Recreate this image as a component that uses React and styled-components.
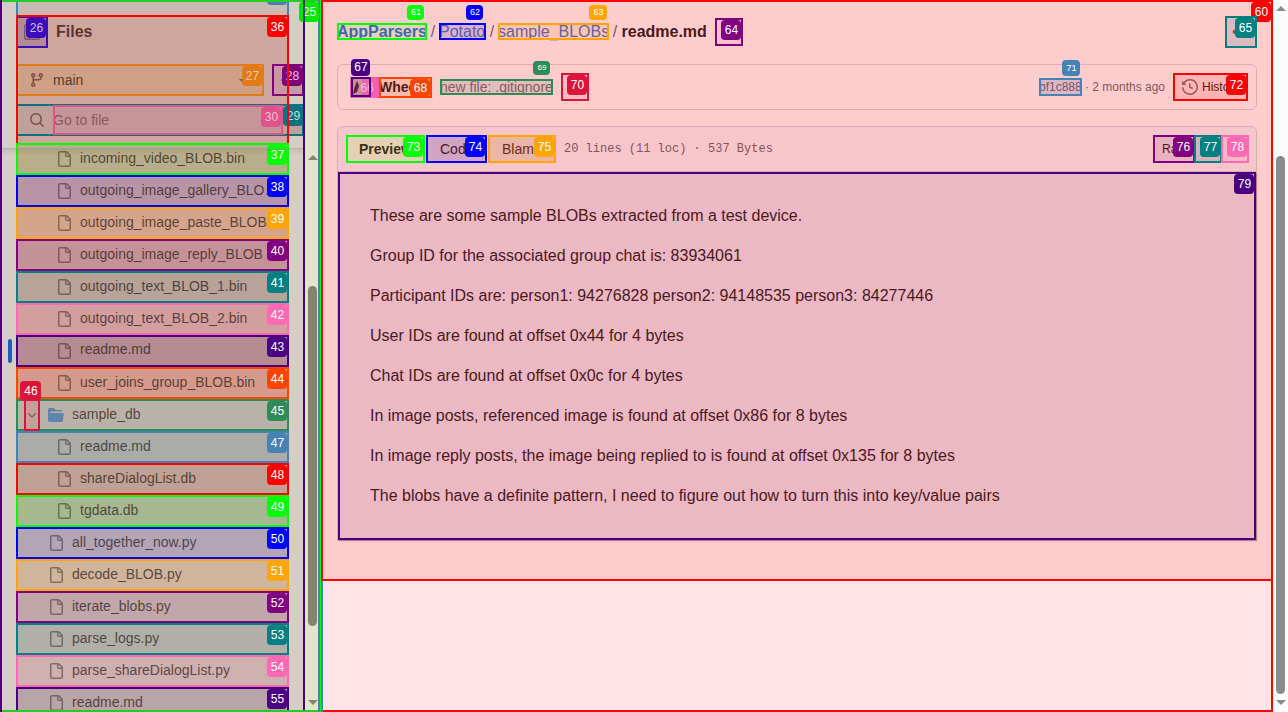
import React from "react";
import styled, { createGlobalStyle } from "styled-components";

const Global = createGlobalStyle`
  * { box-sizing: border-box; }
  html, body { margin: 0; overflow: hidden; }
  body { font-family: "Liberation Sans", Arial, sans-serif; font-size: 14px; color: #4b1820; }
  p { margin: 0; }
`;

const Shell = styled.div`
  display: flex;
  width: 1288px;
  height: 712px;
  overflow: hidden;
`;

/* ---- numbered outlines ---- */
const Outline = styled.span`
  position: absolute;
  inset: 0;
  border: 2px solid ${(p) => p.$c};
  pointer-events: none;
`;
const Tag = styled.span`
  position: absolute;
  top: ${(p) => p.$top}px;
  right: ${(p) => p.$right}px;
  width: ${(p) => p.$w}px;
  height: ${(p) => p.$h}px;
  display: flex;
  align-items: center;
  justify-content: center;
  padding-left: 1px;
  border-radius: 4px;
  background: ${(p) => p.$c};
  color: ${(p) => p.$ink || "#fff"};
  font: 400 ${(p) => p.$size}px/1 "Liberation Sans", Arial, sans-serif;
  letter-spacing: 0;
`;
const Mark = ({ c, n, top = 0, right = 0, w = 20, h = 20, size = 12, ink }) => (
  <Outline $c={c}>
    <Tag $c={c} $top={top} $right={right} $w={w} $h={h} $size={size} $ink={ink}>{n}</Tag>
  </Outline>
);

/* ---- sidebar ---- */
const Sidebar = styled.aside`
  position: relative;
  display: flex;
  flex: none;
  width: 323px;
  height: 712px;
  background: #d6cdc4;
  border-left: 2px solid #4b0082;
`;
const Pane = styled.div`
  width: 303px;
  padding-left: 14px;
  border-right: 2px solid #4b0082;
  overflow: hidden;
`;
const TopStrip = styled.div`
  position: relative;
  width: 273px;
  height: 15px;
  background: #cbb9b2;
  border: solid #4682b4;
  border-width: 0 2px;
`;
const Header = styled.div`
  position: relative;
  width: 273px;
  height: 128px;
  background: #cfa69e;
  padding-top: 1px;
`;
const HeaderFrame = styled.span`
  position: absolute;
  inset: 0;
  border: 2px solid #f00;
  border-bottom: 0;
`;
const TitleRow = styled.div`
  display: flex;
  align-items: center;
  gap: 8px;
  height: 32px;
  font-size: 16px;
  font-weight: 700;
  color: #5f342e;
`;
const PanelButton = styled.div`
  position: relative;
  width: 32px;
  height: 32px;
  padding: 8px;
  background: #b58b9c;
  color: #7d5a60;
`;
const BranchRow = styled.div`
  display: flex;
  gap: 8px;
  width: 288px;
  margin-top: 16px;
`;
const Branch = styled.div`
  position: relative;
  display: flex;
  align-items: center;
  gap: 8px;
  width: 248px;
  height: 32px;
  padding-left: 13px;
  background: #cf9f86;
  color: #5f3a28;
`;
const Caret = styled.span`
  position: absolute;
  right: 15px;
  top: 15px;
  border: 5px solid transparent;
  border-top-color: #80503c;
  border-bottom: 0;
`;
const Plus = styled.div`
  position: relative;
  width: 32px;
  height: 32px;
  background: #c79aa2;
`;
const Search = styled.div`
  position: relative;
  display: flex;
  align-items: center;
  gap: 8px;
  width: 288px;
  height: 32px;
  margin-top: 8px;
  padding-left: 13px;
  background: #c0a098;
  color: #7a504c;
`;
const SearchField = styled.div`
  position: relative;
  width: 230px;
  height: 30px;
  line-height: 30px;
  background: #c69597;
  color: #855a62;
`;
const Tree = styled.div`
  position: relative;
  width: 273px;
`;
const Row = styled.div`
  position: relative;
  display: flex;
  align-items: center;
  gap: 8px;
  height: 32px;
  padding-left: ${(p) => p.$pad}px;
  background: ${(p) => p.$bg};
  color: rgba(28, 12, 8, 0.68);
  white-space: nowrap;
`;
const Name = styled.span`
  overflow: hidden;
  text-overflow: ellipsis;
  width: ${(p) => p.$w || "auto"};
  margin-bottom: ${(p) => (p.$up ? 4 : 2)}px;
`;
const Current = styled.span`
  position: absolute;
  left: -8px;
  top: 4px;
  width: 4px;
  height: 24px;
  border-radius: 3px;
  background: #1f5fae;
`;
const Chevron = styled.span`
  position: relative;
  width: 16px;
  height: 32px;
  display: flex;
  align-items: center;
  background: #c4a09c;
`;
const ChevronMark = styled.span`
  position: absolute;
  left: 8px;
  top: 0;
  width: 16px;
  height: 32px;
`;
const HeaderEdge = styled.div`
  position: absolute;
  left: -14px;
  top: 5px;
  width: 301px;
  height: 8px;
  border-top: 1px solid rgba(130, 150, 150, 0.45);
  background: linear-gradient(rgba(60, 60, 40, 0.1), rgba(60, 60, 40, 0));
`;
const SideTrack = styled.div`
  display: flex;
  flex-direction: column;
  align-items: center;
  width: 13px;
  background: #e2e4cc;
  padding: 155px 0 7px 2px;
`;
const Stripe = styled.div`
  width: ${(p) => p.$w}px;
  background: ${(p) => p.$c};
`;
const Arrow = styled.span`
  flex: none;
  border: solid transparent;
  border-width: ${(p) => (p.$down ? "5px 5px 0" : "0 5px 5px")};
  border-${(p) => (p.$down ? "top" : "bottom")}-color: ${(p) => p.$c};
`;
const Thumb = styled.div`
  flex: none;
  width: 9px;
  height: ${(p) => p.$h}px;
  margin-top: ${(p) => p.$mt}px;
  margin-bottom: auto;
  border-radius: 5px;
  background: ${(p) => p.$c};
`;
const EdgeLine = styled.span`
  position: absolute;
  left: 0;
  right: 5px;
  height: 2px;
  ${(p) => p.$side}: 0;
  background: #22cf22;
`;
const SidebarTag = styled.span`
  position: absolute;
  left: 297px;
  top: 0;
  width: 20px;
  height: 22px;
`;
const TagDivider = styled.span`
  position: absolute;
  left: 301px;
  top: 0;
  width: 2px;
  height: 22px;
  background: #4b0082;
  opacity: 0.75;
`;

/* ---- main ---- */
const Main = styled.main`
  position: relative;
  display: flex;
  flex-direction: column;
  width: 950px;
  height: 712px;
  background: #ffe5e5;
  border: solid #f00;
  border-width: 0 2px 2px 0;
`;
const Content = styled.section`
  position: relative;
  height: 581px;
  padding: 14px 14px 0;
  background: #ffcccc;
  border: solid #f00;
  border-width: 2px 0;
`;
const Crumbs = styled.nav`
  display: flex;
  align-items: center;
  height: 32px;
  font-size: 16px;
  color: #84545a;
`;
const Crumb = styled.a`
  position: relative;
  width: ${(p) => p.$w}px;
  height: 17px;
  margin-bottom: 2px;
  line-height: 17px;
  background: ${(p) => p.$bg};
  color: ${(p) => p.$fg};
  font-weight: ${(p) => (p.$bold ? 700 : 400)};
  white-space: nowrap;
`;
const Slash = styled.span`
  width: 12px;
  text-align: center;
`;
const FileName = styled.strong`
  width: 94px;
  padding-left: 0.5px;
  color: #4b1820;
`;
const Square = styled.div`
  position: relative;
  display: flex;
  align-items: center;
  width: ${(p) => p.$s || 28}px;
  height: ${(p) => p.$s || 28}px;
  margin-left: ${(p) => p.$ml || "0"};
  padding-left: 7px;
  background: ${(p) => p.$bg};
`;
const Commit = styled.div`
  display: flex;
  align-items: center;
  width: 920px;
  height: 46px;
  margin-top: 16px;
  padding: 0 8px 0 12px;
  border: 1px solid #dbacb2;
  border-radius: 6px;
`;
const Avatar = styled.div`
  position: relative;
  width: 29px;
  height: 21px;
  background: #f45fb0;
`;
const AvatarFrame = styled.div`
  position: absolute;
  left: 1px;
  top: 0;
  width: 20px;
  height: 20px;
`;
const AvatarNumber = styled.span`
  position: absolute;
  left: 10.5px;
  top: 4px;
  font-size: 12px;
  line-height: 14px;
  color: #f7c0e0;
`;
const Box = styled.div`
  position: relative;
  flex: none;
  width: ${(p) => p.$w}px;
  height: ${(p) => p.$h}px;
  margin-left: ${(p) => p.$ml || "0"};
  line-height: ${(p) => p.$h}px;
  background: ${(p) => p.$bg};
  color: ${(p) => p.$fg || "#4b1820"};
  font-size: ${(p) => p.$size || 14}px;
  font-weight: ${(p) => (p.$bold ? 700 : 400)};
  white-space: nowrap;
  padding-left: ${(p) => p.$pl || 0}px;
`;
const When = styled.span`
  width: 91px;
  padding-left: 3px;
  font-size: 12px;
  color: #84545a;
  white-space: nowrap;
`;
const History = styled(Box)`
  display: flex;
  align-items: center;
  gap: 4px;
`;
const FileCard = styled.div`
  width: 920px;
  height: 415px;
  margin-top: 16px;
  border: 1px solid #dbacb2;
  border-radius: 6px 6px 0 0;
  background: #f7c6ca;
`;
const Toolbar = styled.div`
  display: flex;
  align-items: center;
  height: 45px;
  padding: 0 7px 1px 8px;
  border-bottom: 1px solid #dbacb2;
`;
const Stats = styled.span`
  margin-left: 8px;
  font: 12px "Liberation Mono", monospace;
  color: #84545a;
`;
const Markdown = styled.article`
  position: relative;
  display: flex;
  flex-direction: column;
  gap: 16px;
  height: 368px;
  padding: 32px;
  background: #ebb8c4;
  font-size: 16px;
  line-height: 24px;
  box-shadow: 1px 1px 1px rgba(120, 60, 80, 0.4);
`;
const PageTrack = styled.div`
  display: flex;
  flex-direction: column;
  align-items: center;
  width: 15px;
  padding: 6px 0 7px;
  background: #fcfcfc;
`;

const FileIcon = () => (
  <svg width="16" height="16" viewBox="0 0 16 16" fill="currentColor" opacity=".62">
    <path d="M2 1.75C2 .784 2.784 0 3.75 0h6.586c.464 0 .909.184 1.237.513l2.914 2.914c.329.328.513.773.513 1.237v9.586A1.75 1.75 0 0 1 13.25 16h-9.5A1.75 1.75 0 0 1 2 14.25Zm1.75-.25a.25.25 0 0 0-.25.25v12.5c0 .138.112.25.25.25h9.5a.25.25 0 0 0 .25-.25V6h-2.75A1.75 1.75 0 0 1 9 4.25V1.5Zm6.75.062V4.25c0 .138.112.25.25.25h2.688l-.011-.013-2.914-2.914-.013-.011Z" />
  </svg>
);
const FolderIcon = () => (
  <svg width="16" height="16" viewBox="0 0 16 16" fill="#5f86a8">
    <path d="M.513 1.513A1.75 1.75 0 0 1 1.75 1h3.5c.55 0 1.07.26 1.4.7l.9 1.2a.25.25 0 0 0 .2.1H13a1 1 0 0 1 1 1v.5H2.75a.75.75 0 0 0 0 1.5h11.978a1 1 0 0 1 .994 1.117L15 13.25A1.75 1.75 0 0 1 13.25 15H1.75A1.75 1.75 0 0 1 0 13.25V2.75c0-.464.184-.91.513-1.237Z" />
  </svg>
);
const BranchIcon = () => (
  <svg width="16" height="16" viewBox="0 0 16 16" fill="#80503f">
    <path d="M9.5 3.25a2.25 2.25 0 1 1 3 2.122V6A2.5 2.5 0 0 1 10 8.5H6a1 1 0 0 0-1 1v1.128a2.251 2.251 0 1 1-1.5 0V5.372a2.25 2.25 0 1 1 1.5 0v1.836A2.493 2.493 0 0 1 6 7h4a1 1 0 0 0 1-1v-.628A2.25 2.25 0 0 1 9.5 3.25Zm-6 0a.75.75 0 1 0 1.5 0 .75.75 0 0 0-1.5 0Zm8.25-.75a.75.75 0 1 0 0 1.5.75.75 0 0 0 0-1.5ZM4.25 12a.75.75 0 1 0 0 1.5.75.75 0 0 0 0-1.5Z" />
  </svg>
);
const SearchIcon = () => (
  <svg width="16" height="16" viewBox="0 0 16 16" fill="currentColor">
    <path d="M10.68 11.74a6 6 0 0 1-7.922-8.982 6 6 0 0 1 8.982 7.922l3.04 3.04a.749.749 0 0 1-.326 1.275.749.749 0 0 1-.734-.215ZM11.5 7a4.499 4.499 0 1 0-8.997 0A4.499 4.499 0 0 0 11.5 7Z" />
  </svg>
);
const HistoryIcon = () => (
  <svg width="16" height="16" viewBox="0 0 16 16" fill="#935a60">
    <path d="m.427 1.927 1.215 1.215a8.002 8.002 0 1 1-1.6 5.685.75.75 0 1 1 1.493-.154 6.5 6.5 0 1 0 1.18-4.458l1.358 1.358A.25.25 0 0 1 3.896 6H.25A.25.25 0 0 1 0 5.75V2.104a.25.25 0 0 1 .427-.177ZM7.75 4a.75.75 0 0 1 .75.75v2.992l2.028.812a.75.75 0 0 1-.557 1.392l-2.5-1A.751.751 0 0 1 7 8.25v-3.5A.75.75 0 0 1 7.75 4Z" />
  </svg>
);
const ChevronIcon = () => (
  <svg width="16" height="16" viewBox="0 0 16 16" fill="none" stroke="#80605c" strokeWidth="1.3">
    <path d="m4.2 6.3 3.8 3.8 3.8-3.8" />
  </svg>
);
const PanelIcon = () => (
  <svg width="16" height="16" viewBox="0 0 16 16" fill="none" stroke="currentColor" strokeWidth="1.5">
    <rect x=".75" y=".75" width="14.5" height="14.5" rx="1.2" />
    <path d="M5.5 1v14" />
  </svg>
);
const PlusIcon = () => (
  <svg width="32" height="32" viewBox="0 0 32 32" fill="none" stroke="#80505c" strokeWidth="1.5">
    <path d="M9 16h14M16 9v14" />
  </svg>
);

const rows = [
  [37, "incoming_video_BLOB.bin", "#0f0", "#b8ae8b", 1],
  [38, "outgoing_image_gallery_BLOB.bin", "#00f", "#b795a6", 1, "199px"],
  [39, "outgoing_image_paste_BLOB", "#ffa500", "#d4a58c", 1],
  [40, "outgoing_image_reply_BLOB", "#800080", "#c59397", 1],
  [41, "outgoing_text_BLOB_1.bin", "#008080", "#b7a398", 1],
  [42, "outgoing_text_BLOB_2.bin", "#ff69b4", "#d39e9e", 1],
  [43, "readme.md", "#4b0082", "#b68b92", 1],
  [44, "user_joins_group_BLOB.bin", "#ff4500", "#d49a8b", 1],
  [45, "sample_db", "#2e8b57", "#b9b2a8", 0],
  [47, "readme.md", "#4682b4", "#abaca8", 1],
  [48, "shareDialogList.db", "#f00", "#c0a196", 1],
  [49, "tgdata.db", "#0f0", "#a6b892", 1],
  [50, "all_together_now.py", "#00f", "#b3a4b6", 0],
  [51, "decode_BLOB.py", "#ffa500", "#cfb59c", 0],
  [52, "iterate_blobs.py", "#800080", "#c1a6aa", 0],
  [53, "parse_logs.py", "#008080", "#b0b0a8", 0],
  [54, "parse_shareDialogList.py", "#ff69b4", "#cfb0b0", 0],
  [55, "readme.md", "#4b0082", "#b9a4a8", 0],
];

const paragraphs = [
  "These are some sample BLOBs extracted from a test device.",
  "Group ID for the associated group chat is: 83934061",
  "Participant IDs are: person1: 94276828 person2: 94148535 person3: 84277446",
  "User IDs are found at offset 0x44 for 4 bytes",
  "Chat IDs are found at offset 0x0c for 4 bytes",
  "In image posts, referenced image is found at offset 0x86 for 8 bytes",
  "In image reply posts, the image being replied to is found at offset 0x135 for 8 bytes",
  "The blobs have a definite pattern, I need to figure out how to turn this into key/value pairs",
];

function FileTree() {
  return (
    <Tree>
      {rows.map(([n, name, c, bg, deep, w]) => {
        const folder = n === 45;
        return (
          <Row key={n} $bg={bg} $pad={folder ? 8 : deep ? 40 : 32}>
            {n === 43 && <Current />}
            {folder ? <><Chevron><ChevronIcon /></Chevron><FolderIcon /></> : <FileIcon />}
            <Name $w={w} $up={n === 43}>{name}</Name>
            <Mark c={c} n={n} />
            {folder && (
              <ChevronMark><Mark c="#dc143c" n={46} top={-20} right={-3} w={21} /></ChevronMark>
            )}
          </Row>
        );
      })}
      <HeaderEdge />
    </Tree>
  );
}

export default function App() {
  return (
    <Shell>
      <Global />
      <Sidebar>
        <SidebarTag><Tag $c="#00e600" $top={2} $right={0} $w={20} $h={20} $size={12} $ink="#e6ffe0">25</Tag></SidebarTag>
        <Pane>
          <TopStrip><Tag $c="#4682b4" $top={-15} $right={0} $w={20} $h={20} $size={12} /></TopStrip>
          <Header>
            <TitleRow>
              <PanelButton><PanelIcon /><Mark c="#3b0dbe" n={26} ink="#d8b4dc" /></PanelButton>
              Files
            </TitleRow>
            <BranchRow>
              <Branch><BranchIcon />main<Caret /><Mark c="#e17b17" n={27} ink="#efc4a4" /></Branch>
              <Plus><PlusIcon /><Mark c="#800078" n={28} ink="#e6c4dc" /></Plus>
            </BranchRow>
            <Search>
              <SearchIcon />
              <Mark c="#08747f" n={29} right={-1} ink="#c4dcdc" />
              <SearchField>Go to file<Mark c="#e0528b" n={30} ink="#f0c0d0" /></SearchField>
            </Search>
            <HeaderFrame><Tag $c="#f00" $top={0} $right={0} $w={20} $h={20} $size={12}>36</Tag></HeaderFrame>
          </Header>
          <FileTree />
        </Pane>
        <SideTrack>
          <Arrow $c="#84866c" />
          <Thumb $h={340} $mt={126} $c="#84866c" />
          <Arrow $down $c="#84866c" />
        </SideTrack>
        <Stripe $w={2} $c="#4682b4" />
        <Stripe $w={1} $c="#0f0" />
        <Stripe $w={2} $c="linear-gradient(#f00 581px, #4682b4 581px)" />
        <EdgeLine $side="top" />
        <EdgeLine $side="bottom" />
        <TagDivider />
      </Sidebar>
      <Main>
        <Content>
          <Tag $c="#f00" $top={0} $right={0} $w={20} $h={20} $size={12}>60</Tag>
          <Crumbs>
            <Crumb $w={90} $bg="#e5d2b8" $fg="#3c69a8" $bold>AppParsers<Mark c="#0f0" n={61} top={-20} right={1} w={17} h={15} size={9} /></Crumb>
            <Slash>/</Slash>
            <Crumb $w={47} $bg="#dbb0d4" $fg="#5560a8">Potato<Mark c="#00f" n={62} top={-20} right={1} w={17} h={15} size={9} /></Crumb>
            <Slash>/</Slash>
            <Crumb $w={111} $bg="#fdc4b0" $fg="#665fa4">sample_BLOBs<Mark c="#ffa500" n={63} top={-20} right={0} w={18} h={15} size={9} /></Crumb>
            <Slash>/</Slash>
            <FileName>readme.md</FileName>
            <Square $bg="#f8c0cc"><Mark c="#800080" n={64} /></Square>
            <Square $s={32} $bg="#dabcc0" $ml="auto">•<Mark c="#008080" n={65} /></Square>
          </Crumbs>
          <Commit>
            <Avatar>
              <svg width="12" height="18" viewBox="0 0 12 18"><path d="M3 2h9v16H3z" fill="#d08c9c" /><path d="m7 4 2 5-2 6-4 2 2-8z" fill="#5b2434" /></svg>
              <AvatarNumber>66</AvatarNumber>
              <AvatarFrame><Mark c="#4b0082" n={67} top={-20} right={-1} w={19} h={17} /></AvatarFrame>
            </Avatar>
            <Box $w={53} $h={21} $bg="#ffb8ac" $bold>Whee<Mark c="#ff4500" n={68} h={18} /></Box>
            <Box $w={113} $h={16} $bg="#dfbfbb" $fg="#8a5a62" $ml="8px">new file: .gitignore<Mark c="#2e8b57" n={69} top={-20} right={1} w={17} h={14} size={8} /></Box>
            <Square $bg="#fbbcc6" $ml="8px"><Mark c="#dc143c" n={70} /></Square>
            <Box $w={43} $h={18} $bg="#dcb8c4" $fg="#805468" $size={12} $ml="auto">bf1c888<Mark c="#4682b4" n={71} top={-20} w={18} h={16} size={9} /></Box>
            <When>· 2 months ago</When>
            <History $w={75} $h={28} $bg="#ffb4b4" $size={12} $pl={9}><HistoryIcon />History<Mark c="#f00" n={72} /></History>
          </Commit>
          <FileCard>
            <Toolbar>
              <Box $w={79} $h={28} $bg="#e4d0b4" $bold $pl={13} $fg="#40300f">Preview<Mark c="#0f0" n={73} /></Box>
              <Box $w={61} $h={28} $bg="#d0a4c4" $pl={14} $ml="1px">Code<Mark c="#00f" n={74} /></Box>
              <Box $w={68} $h={28} $bg="#edb4a8" $pl={14} $ml="1px" $fg="#66301c">Blame<Mark c="#ffa500" n={75} /></Box>
              <Stats>20 lines (11 loc) · 537 Bytes</Stats>
              <Box $w={42} $h={28} $bg="#e8b0c0" $size={12} $pl={9} $ml="auto">Raw<Mark c="#800080" n={76} /></Box>
              <Box $w={28} $h={28} $bg="#d4b4b8" $ml="-1px"><Mark c="#008080" n={77} /></Box>
              <Box $w={28} $h={28} $bg="#f8b8c8" $ml="-1px"><Mark c="#ff69b4" n={78} /></Box>
            </Toolbar>
            <Markdown>
              {paragraphs.map((t) => <p key={t}>{t}</p>)}
              <Mark c="#4b0082" n={79} />
            </Markdown>
          </FileCard>
        </Content>
      </Main>
      <PageTrack>
        <Arrow $c="#8b8b8b" />
        <Thumb $h={538} $mt={145} $c="#8b8b8b" />
        <Arrow $down $c="#8b8b8b" />
      </PageTrack>
    </Shell>
  );
}
